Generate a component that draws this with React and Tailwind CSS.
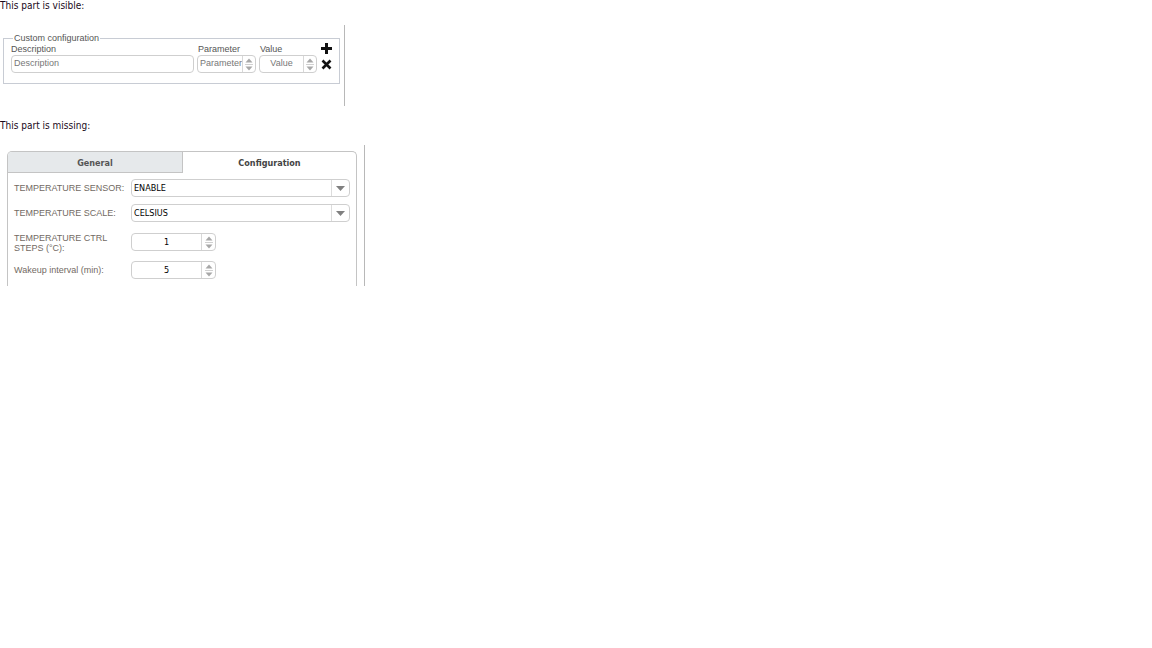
import React from 'react';

const tahoma = { fontFamily: '"DejaVu Sans Condensed", "DejaVu Sans", Verdana, sans-serif' };
const arial = { fontFamily: '"Liberation Sans", Arial, sans-serif' };

// tiny up/down arrows used by the number fields
const SpinButtons = ({ className = '' }) => (
  <div className={`flex flex-col items-center justify-center border-l border-[#d8d8d8] ${className}`}>
    <svg width="8" height="5" viewBox="0 0 8 5" className="mb-[1px]">
      <path d="M4 0.5 L7.5 4.5 L0.5 4.5 Z" fill="#a8a8a8" />
    </svg>
    <div className="w-[8px] h-px bg-[#d0d0d0]" />
    <svg width="8" height="5" viewBox="0 0 8 5" className="mt-[1px]">
      <path d="M0.5 0.5 L7.5 0.5 L4 4.5 Z" fill="#a8a8a8" />
    </svg>
  </div>
);

const SelectBox = ({ value }) => (
  <div className="flex h-[18px] w-[219px] items-stretch rounded-[4px] border border-[#cfcfcf] bg-white">
    <div className="flex flex-1 items-center pl-[2px] pt-px text-[9px] text-black" style={tahoma}>{value}</div>
    <div className="flex w-[18px] items-center justify-center border-l border-[#dcdcdc]">
      <svg width="9" height="5" viewBox="0 0 9 5">
        <path d="M0 0 L9 0 L4.5 5 Z" fill="#808080" />
      </svg>
    </div>
  </div>
);

const NumberBox = ({ value }) => (
  <div className="flex h-[18px] w-[85px] items-stretch rounded-[4px] border border-[#cfcfcf] bg-white">
    <div className="flex flex-1 items-center justify-center pt-px text-[9px] text-black" style={tahoma}>{value}</div>
    <SpinButtons className="w-[14px]" />
  </div>
);

const Row = ({ label, children, className = '' }) => (
  <div className={`flex items-center ${className}`}>
    <div className="w-[117px] text-[9px] leading-[10px] text-[#726a63]" style={arial}>{label}</div>
    {children}
  </div>
);

export default function App() {
  return (
    <div className="min-h-[648px] w-[1152px] bg-white text-black">
      <div className="h-[12px] text-[10px] leading-[12px] text-[#1a0a1a]" style={tahoma}>This part is visible:</div>

      {/* custom configuration block */}
      <div className="mt-[13px] h-[81px] w-[345px] border-r border-[#b8b8b8] pt-[8px]">
        <fieldset className="ml-[3px] w-[335px] border border-[#c8ccd4] px-[7px] pb-[10px] pt-0">
          <legend className="ml-[2px] px-[1px] text-[9px] leading-[10px] text-[#555]" style={arial}>Custom configuration</legend>
          <div className="flex items-end">
            <div className="w-[186px]">
              <div className="text-[9px] leading-[12px] text-[#555]" style={arial}>Description</div>
              <div className="flex h-[18px] w-[183px] items-center rounded-[4px] border border-[#cfcfcf] pl-[2px] text-[9px] text-[#777]" style={arial}>Description</div>
            </div>
            <div className="w-[62px]">
              <div className="pl-px text-[9px] leading-[12px] text-[#555]" style={arial}>Parameter</div>
              <div className="flex h-[18px] w-[59px] items-stretch rounded-[4px] border border-[#cfcfcf]">
                <div className="flex flex-1 items-center overflow-hidden pl-[2px] text-[9px] text-[#777]" style={arial}>Parameter</div>
                <SpinButtons className="w-[13px]" />
              </div>
            </div>
            <div className="w-[62px]">
              <div className="pl-px text-[9px] leading-[12px] text-[#555]" style={arial}>Value</div>
              <div className="flex h-[18px] w-[58px] items-stretch rounded-[4px] border border-[#cfcfcf]">
                <div className="flex flex-1 items-center justify-center text-[9px] text-[#777]" style={arial}>Value</div>
                <SpinButtons className="w-[13px]" />
              </div>
            </div>
            <div className="flex flex-col items-center">
              <svg width="11" height="11" viewBox="0 0 11 11" className="mb-[5px]">
                <path d="M4 0 H7 V4 H11 V7 H7 V11 H4 V7 H0 V4 H4 Z" fill="#111" />
              </svg>
              <svg width="11" height="11" viewBox="0 0 11 11" className="mb-[3px]">
                <path d="M1.5 1.5 L9.5 9.5 M9.5 1.5 L1.5 9.5" stroke="#111" strokeWidth="2.6" strokeLinecap="butt" />
              </svg>
            </div>
          </div>
        </fieldset>
      </div>

      <div className="mt-[14px] h-[12px] text-[10px] leading-[12px] text-[#1a0a1a]" style={tahoma}>This part is missing:</div>

      {/* tabbed device panel */}
      <div className="mt-[13px] h-[141px] w-[365px] border-r border-[#b8b8b8] pt-[6px]">
        <div className="ml-[7px] h-[135px] w-[350px] rounded-t-[5px] border border-b-0 border-[#c4c4c4] bg-white">
          <div className="flex h-[21px]">
            <div className="flex w-[175px] items-center justify-center rounded-tl-[4px] border-b border-r border-[#c4c4c4] bg-[#e6e9eb] pt-[3px] text-[9px] font-bold text-[#555]" style={tahoma}>General</div>
            <div className="flex flex-1 items-center justify-center pt-[2px] text-[9px] font-bold text-[#444]" style={tahoma}>Configuration</div>
          </div>
          <div className="pl-[6px] pt-[6px]">
            <Row label="TEMPERATURE SENSOR:">
              <SelectBox value="ENABLE" />
            </Row>
            <Row label="TEMPERATURE SCALE:" className="mt-[7px]">
              <SelectBox value="CELSIUS" />
            </Row>
            <Row label={<>TEMPERATURE CTRL<br />STEPS (°C):</>} className="mt-[11px] !items-start">
              <NumberBox value="1" />
            </Row>
            <Row label="Wakeup interval (min):" className="mt-[8px]">
              <NumberBox value="5" />
            </Row>
          </div>
        </div>
      </div>
    </div>
  );
}
